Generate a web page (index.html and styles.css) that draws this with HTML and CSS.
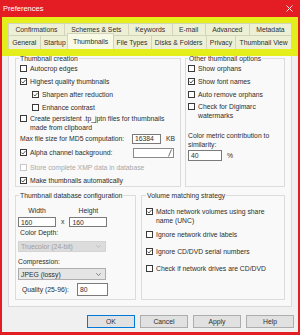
FILE: index.html
```html
<!DOCTYPE html>
<html lang="en">
<head>
    <meta charset="UTF-8">
    <meta name="viewport" content="width=device-width, initial-scale=1.0">
    <title>Preferences</title>
    <link rel="stylesheet" href="styles.css">
</head>
<body>
    <div class="window">
        <div class="titlebar">
            <span class="title">Preferences</span>
            <svg class="close" width="7" height="7" viewBox="0 0 7 7">
                <path d="M0.5 0.5 L6.5 6.5 M6.5 0.5 L0.5 6.5" stroke="#fff" stroke-width="0.9" fill="none"/>
            </svg>
        </div>

        <div class="tabstrip">
            <div class="tabrow back">
                <div class="tab">Confirmations</div>
                <div class="tab">Schemes &amp; Sets</div>
                <div class="tab">Keywords</div>
                <div class="tab">E-mail</div>
                <div class="tab">Advanced</div>
                <div class="tab">Metadata</div>
            </div>
            <div class="tabrow front">
                <div class="tab">General</div>
                <div class="tab">Startup</div>
                <div class="tab active">Thumbnails</div>
                <div class="tab">File Types</div>
                <div class="tab">Disks &amp; Folders</div>
                <div class="tab">Privacy</div>
                <div class="tab">Thumbnail View</div>
            </div>
        </div>

        <div class="page">
            <div class="top-groups">
                <div class="group creation">
                    <span class="group-title">Thumbnail creation</span>
                    <div class="row"><span class="box"></span>Autocrop edges</div>
                    <div class="row"><span class="box"><svg viewBox="0 0 5 5"><path d="M0.5 2.6 L1.9 4 L4.6 0.9"/></svg></span>Highest quality thumbnails</div>
                    <div class="row indent"><span class="box"><svg viewBox="0 0 5 5"><path d="M0.5 2.6 L1.9 4 L4.6 0.9"/></svg></span>Sharpen after reduction</div>
                    <div class="row indent"><span class="box"></span>Enhance contrast</div>
                    <div class="row multi"><span class="box"></span><span>Create persistent .tp_jptn files for thumbnails<br>made from clipboard</span></div>
                    <div class="row">
                        <span class="md5-label">Max file size for MD5 computation:</span>
                        <span class="textbox md5">16384</span>
                        <span class="unit">KB</span>
                    </div>
                    <div class="row alpha">
                        <span class="box"><svg viewBox="0 0 5 5"><path d="M0.5 2.6 L1.9 4 L4.6 0.9"/></svg></span>
                        <span class="alpha-label">Alpha channel background:</span>
                        <span class="colorbox">
                            <svg width="4" height="8" viewBox="0 0 4 8"><path d="M0.5 7.5 L3.5 0.5" stroke="#333" stroke-width="0.7"/></svg>
                        </span>
                    </div>
                    <div class="row disabled xmp"><span class="box"></span>Store complete XMP data in database</div>
                    <div class="row last"><span class="box"><svg viewBox="0 0 5 5"><path d="M0.5 2.6 L1.9 4 L4.6 0.9"/></svg></span>Make thumbnails automatically</div>
                </div>

                <div class="group other">
                    <span class="group-title">Other thumbnail options</span>
                    <div class="row"><span class="box"></span>Show orphans</div>
                    <div class="row"><span class="box"><svg viewBox="0 0 5 5"><path d="M0.5 2.6 L1.9 4 L4.6 0.9"/></svg></span>Show font names</div>
                    <div class="row"><span class="box"></span>Auto remove orphans</div>
                    <div class="row multi digimarc"><span class="box"></span><span>Check for Digimarc<br>watermarks</span></div>
                    <div class="metric-label">Color metric contribution to<br>similarity:</div>
                    <div class="metric-row">
                        <span class="textbox metric">40</span>
                        <span class="unit">%</span>
                    </div>
                </div>
            </div>

            <div class="bottom-groups">
                <div class="group database">
                    <span class="group-title">Thumbnail database configuration</span>
                    <div class="dims">
                        <div class="dim">
                            <span class="dim-label">Width</span>
                            <span class="textbox dim-input">160</span>
                        </div>
                        <span class="times">x</span>
                        <div class="dim">
                            <span class="dim-label">Height</span>
                            <span class="textbox dim-input">160</span>
                        </div>
                    </div>
                    <div class="field-label depth">Color Depth:</div>
                    <div class="select disabled-select">
                        <span>Truecolor (24-bit)</span>
                        <svg width="5" height="3" viewBox="0 0 5 3"><path d="M0.3 0.3 L2.5 2.5 L4.7 0.3" stroke="#b5b5b5" stroke-width="0.7" fill="none"/></svg>
                    </div>
                    <div class="field-label compression">Compression:</div>
                    <div class="select">
                        <span>JPEG (lossy)</span>
                        <svg width="5" height="3" viewBox="0 0 5 3"><path d="M0.3 0.3 L2.5 2.5 L4.7 0.3" stroke="#555" stroke-width="0.7" fill="none"/></svg>
                    </div>
                    <div class="quality">
                        <span class="quality-label">Quality (25-96):</span>
                        <span class="textbox quality-input">80</span>
                    </div>
                </div>

                <div class="group volume">
                    <span class="group-title">Volume matching strategy</span>
                    <div class="row multi"><span class="box"><svg viewBox="0 0 5 5"><path d="M0.5 2.6 L1.9 4 L4.6 0.9"/></svg></span><span>Match network volumes using share<br>name (UNC)</span></div>
                    <div class="row gap3"><span class="box"></span>Ignore network drive labels</div>
                    <div class="row gap4"><span class="box"><svg viewBox="0 0 5 5"><path d="M0.5 2.6 L1.9 4 L4.6 0.9"/></svg></span>Ignore CD/DVD serial numbers</div>
                    <div class="row gap4"><span class="box"></span>Check if network drives are CD/DVD</div>
                </div>
            </div>
        </div>

        <div class="footer">
            <button class="btn default">OK</button>
            <button class="btn">Cancel</button>
            <button class="btn">Apply</button>
            <button class="btn">Help</button>
        </div>
    </div>
</body>
</html>
```

FILE: styles.css
```css
body {
    margin: 0;
    font-family: 'Liberation Sans', Arial, sans-serif;
    font-size: 6.8px;
    color: #2e2e2e;
}

.window {
    width: 300px;
    height: 335px;
    box-sizing: border-box;
    border: solid #e41d25;
    border-width: 0 2px 3px;
    background: #f0f0f0;
    display: flex;
    flex-direction: column;
}

.titlebar {
    height: 17px;
    background: #e41d25;
    display: flex;
    align-items: center;
    justify-content: space-between;
    padding: 0 5px 0 1px;
    flex: none;
}

.titlebar .title {
    color: #ffffff;
    font-size: 7.5px;
}

/* highlighted tab strip */
.tabstrip {
    position: relative;
    z-index: 2;
    height: 26px;
    border: solid #e4ee1a;
    border-width: 6px 6px 7px;
    background: #eef0d6;
    display: flex;
    flex-direction: column;
    flex: none;
}

.tabrow {
    display: flex;
}

.tabrow.back {
    height: 12px;
}

.tabrow.front {
    height: 14px;
}

.tab {
    flex: 1 1 auto;
    display: flex;
    align-items: center;
    justify-content: center;
    white-space: nowrap;
    border-top: 1px solid #d2d4bc;
    border-left: 1px solid #d2d4bc;
    background: #eef0d6;
}

.tab:last-child {
    border-right: 1px solid #d2d4bc;
}

.tab.active {
    position: relative;
    background: #f9fae6;
    margin: -2px -2px 0;
    padding: 0 2px;
    border-right: 1px solid #d2d4bc;
}

.page {
    margin: -2px 6px 0;
    padding: 4px 6px 6px;
    border: 1px solid #dadada;
    border-top: none;
    background: #f9f9f9;
    flex: none;
}

.group {
    position: relative;
    border: 1px solid #dcdcdc;
    box-sizing: border-box;
}

.group-title {
    position: absolute;
    top: -5px;
    left: 3px;
    padding: 0 1px;
    line-height: 9px;
    background: #f9f9f9;
    white-space: nowrap;
}

.top-groups {
    display: flex;
    gap: 4px;
}

.creation {
    flex: 1;
    padding: 3px 4px 0;
}

.other {
    width: 100px;
    padding: 3px 2px 0;
}

.other .group-title {
    left: 2px;
}

.row {
    display: flex;
    align-items: center;
    height: 13px;
    white-space: nowrap;
}

.row.multi {
    height: 18px;
    align-items: flex-start;
    line-height: 9px;
}

.row.multi .box {
    margin-top: 1px;
}

.row.indent {
    padding-left: 12px;
}

.row.alpha {
    height: 15px;
}

.row.xmp {
    height: 14px;
}

.row.last {
    height: 12px;
}

.row.disabled {
    color: #a8a8a8;
}

.row.disabled .box {
    border-color: #c8c8c8;
}

.box {
    width: 7px;
    height: 7px;
    box-sizing: border-box;
    border: 1px solid #3a3a3a;
    background: #ffffff;
    margin-right: 3px;
    flex: none;
    display: flex;
}

.box svg {
    width: 5px;
    height: 5px;
    fill: none;
    stroke: #2a2a2a;
    stroke-width: 0.8;
}

.textbox {
    display: flex;
    align-items: center;
    box-sizing: border-box;
    background: #ffffff;
    border: 1px solid #7a7a7a;
    padding-left: 2px;
}

.md5-label {
    width: 112px;
}

.md5 {
    width: 29px;
    height: 10px;
}

.unit {
    margin-left: 5px;
}

.alpha-label {
    width: 103px;
}

.colorbox {
    width: 41px;
    height: 10px;
    box-sizing: border-box;
    background: #ffffff;
    border: 1px solid #8a8a8a;
    display: flex;
    justify-content: flex-end;
    align-items: center;
    padding-right: 1px;
}

.digimarc {
    margin-top: 1px;
}

.metric-label {
    margin-top: 11px;
    line-height: 9px;
    white-space: nowrap;
}

.metric-row {
    display: flex;
    align-items: center;
    margin-top: 1px;
}

.metric {
    width: 34px;
    height: 11px;
}

.bottom-groups {
    display: flex;
    gap: 5px;
    margin-top: 8px;
}

.database {
    width: 121px;
    padding: 10px 2px 3px;
}

.dims {
    display: flex;
    align-items: flex-end;
}

.dim {
    display: flex;
    flex-direction: column;
    align-items: center;
}

.dim-label {
    line-height: 9px;
}

.dim-input {
    width: 38px;
    height: 10px;
    margin-top: 2px;
}

.times {
    height: 10px;
    line-height: 10px;
    margin: 0 5px;
}

.field-label {
    line-height: 9px;
}

.field-label.depth {
    margin-top: 1px;
    padding-left: 2px;
}

.field-label.compression {
    margin-top: 5px;
}

.select {
    width: 88px;
    height: 12px;
    box-sizing: border-box;
    margin-top: 2px;
    border: 1px solid #adadad;
    background: #e5e5e5;
    display: flex;
    align-items: center;
    justify-content: space-between;
    padding: 0 4px 0 2px;
}

.select.disabled-select {
    height: 11px;
    margin-top: 4px;
    border-color: #d4d4d4;
    background: #dcdcdc;
    color: #a0a0a0;
}

.quality {
    display: flex;
    align-items: center;
    margin-top: 3px;
}

.quality-label {
    width: 55px;
    padding-left: 4px;
}

.quality-input {
    width: 31px;
    height: 13px;
}

.volume {
    flex: 1;
    padding: 11px 4px 0;
}

.volume .group-title {
    left: 4px;
}

.row.gap3 {
    margin-top: 3px;
}

.row.gap4 {
    margin-top: 4px;
}

.footer {
    flex: 1;
    display: flex;
    justify-content: flex-end;
    align-items: flex-start;
    gap: 5px;
    padding: 8px 4px 0 0;
}

.btn {
    width: 48px;
    height: 13px;
    padding: 0;
    font-family: inherit;
    font-size: 6.8px;
    color: #2e2e2e;
    background: #e1e1e1;
    border: 1px solid #adadad;
    border-radius: 0;
}

.btn.default {
    border-color: #0078d7;
}
```
